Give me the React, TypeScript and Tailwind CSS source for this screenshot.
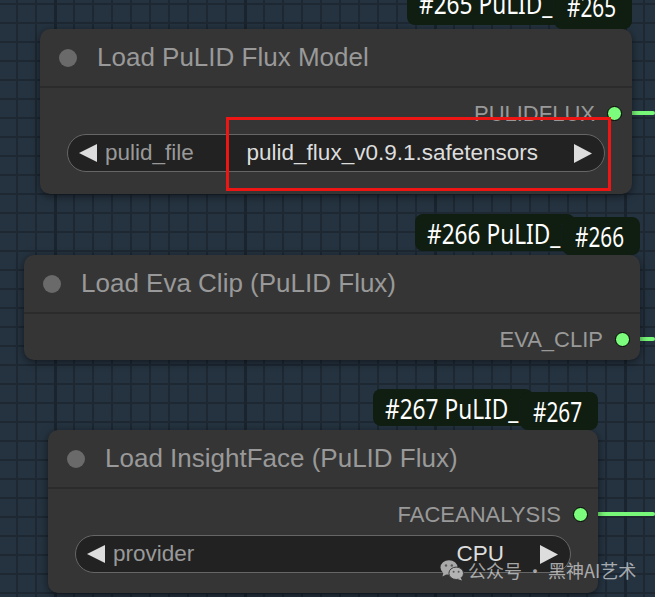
import React from 'react';

interface NodeProps {
  title: string;
  output: string;
  badge: string;
  widget?: { label: string; value: string };
  pos: string;
  textShift: string;
  bottomPad?: string;
}

const LeftArrow = () => (
  <svg width="18" height="18" viewBox="0 0 18 18" className="shrink-0">
    <polygon points="18,0 18,18 0,9" fill="#dddddd" />
  </svg>
);

const RightArrow = () => (
  <svg width="18" height="19" viewBox="0 0 18 19" className="shrink-0">
    <polygon points="0,0 0,19 18,9.5" fill="#dddddd" />
  </svg>
);

const WeChatIcon = () => (
  <svg width="24" height="22" viewBox="0 0 24 22">
    <ellipse cx="9" cy="8.5" rx="8.5" ry="7.3" fill="#a9a9a9" />
    <polygon points="3.5,13 2.5,17.5 7.5,14.8" fill="#a9a9a9" />
    <circle cx="6" cy="6.5" r="1.2" fill="#5a5a5a" />
    <circle cx="11.8" cy="6.5" r="1.2" fill="#5a5a5a" />
    <ellipse cx="16.2" cy="14.3" rx="7.3" ry="6.2" fill="#b3b3b3" stroke="#3a3a3a" strokeWidth="1" />
    <polygon points="20.5,18.5 22,21.5 17.6,20" fill="#b3b3b3" />
    <circle cx="13.6" cy="12.8" r="1" fill="#5a5a5a" />
    <circle cx="18.6" cy="12.8" r="1" fill="#5a5a5a" />
  </svg>
);

const badgeText =
  "inline-block origin-left whitespace-nowrap font-['Noto_Sans',sans-serif] text-[27px] leading-none text-white";

const GraphNode = ({ title, output, badge, widget, pos, textShift, bottomPad = 'pb-[22px]' }: NodeProps) => {
  return (
    <div className={`absolute ${pos}`}>
      {/* id badges above the node */}
      <div className={`absolute right-[65px] top-[-41px] h-[37px] w-[160px] overflow-hidden rounded-[8px] bg-[#101d11] pl-[12px] ${textShift}`}>
        <span className={`${badgeText} scale-x-[0.84]`}>{badge} PuLID_Flux</span>
      </div>
      <div className={`absolute right-0 top-[-38px] h-[38px] w-[78px] overflow-hidden rounded-[8px] bg-[#101d11] pl-[13px] ${textShift}`}>
        <span className={`${badgeText} scale-x-[0.77]`}>{badge}</span>
      </div>

      <div className="rounded-[10px] bg-[#353535] shadow-[0_2px_8px_rgba(0,0,0,0.55)]">
        <div className="flex h-[59px] items-center border-b-2 border-[#2b2b2b] pl-[19px]">
          <div className="size-[18px] rounded-full bg-[#6a6a6a]" />
          <span className="ml-[20px] whitespace-nowrap text-[26px] text-[#999999]">{title}</span>
        </div>

        <div className="flex h-[46px] items-center justify-end pr-[10px] pt-[4px]">
          <span className="text-[22px] text-[#999999]">{output}</span>
          <div className="ml-[12px] size-[15px] rounded-full border-[1.5px] border-black bg-[#7cfc7c]" />
        </div>

        {widget && (
          <div className={`px-[27px] ${bottomPad}`}>
            <div className="flex h-[38px] items-center rounded-full border border-[#666666] bg-[#222222] pl-[11px] pr-[12px] text-[22.5px]">
              <LeftArrow />
              <span className="ml-[8px] text-[#999999]">{widget.label}</span>
              <span className="mr-[36px] flex-1 text-right text-[#dddddd]">{widget.value}</span>
              <RightArrow />
            </div>
          </div>
        )}
      </div>
    </div>
  );
};

export default function App() {
  return (
    <div className="relative h-[597px] w-[655px] overflow-hidden bg-[#253340] bg-[linear-gradient(to_right,#1a242e_3px,transparent_3px),linear-gradient(to_right,#1d2833_2px,transparent_2px),linear-gradient(to_bottom,#1d2833_2px,transparent_2px)] bg-[size:190px_100%,19px_19px,19px_19px] bg-[position:54px_0,16px_0,0_3px] font-['Liberation_Sans',Arial,sans-serif]">
      {/* links */}
      <div className="absolute left-[615px] top-[111px] h-[4px] w-[40px] rounded-full bg-[#78f878]" />
      <div className="absolute left-[623px] top-[337px] h-[4px] w-[32px] rounded-full bg-[#78f878]" />
      <div className="absolute left-[582px] top-[512px] h-[4px] w-[73px] rounded-full bg-[#78f878]" />

      <GraphNode
        pos="left-[40px] top-[29px] w-[592px]"
        title="Load PuLID Flux Model"
        output="PULIDFLUX"
        badge="#265"
        textShift="pt-[2px]"
        widget={{ label: 'pulid_file', value: 'pulid_flux_v0.9.1.safetensors' }}
      />
      <GraphNode
        pos="left-[24px] top-[255px] w-[616px]"
        title="Load Eva Clip (PuLID Flux)"
        output="EVA_CLIP"
        badge="#266"
        textShift="pt-[6px]"
      />
      <GraphNode
        pos="left-[48px] top-[430px] w-[550px]"
        title="Load InsightFace (PuLID Flux)"
        output="FACEANALYSIS"
        badge="#267"
        textShift="pt-[6px]"
        bottomPad="pb-[20px]"
        widget={{ label: 'provider', value: 'CPU' }}
      />

      {/* highlight box */}
      <div className="absolute left-[226px] top-[117px] h-[74px] w-[385px] border-[3px] border-[#ee1515]" />

      {/* watermark */}
      <div className="absolute left-[440px] top-[559px] flex items-center">
        <WeChatIcon />
        <span className="ml-[4px] whitespace-nowrap font-['Noto_Sans_CJK_SC',sans-serif] text-[18px] leading-none text-white/60">
          公众号 · 黑神AI艺术
        </span>
      </div>
    </div>
  );
}
